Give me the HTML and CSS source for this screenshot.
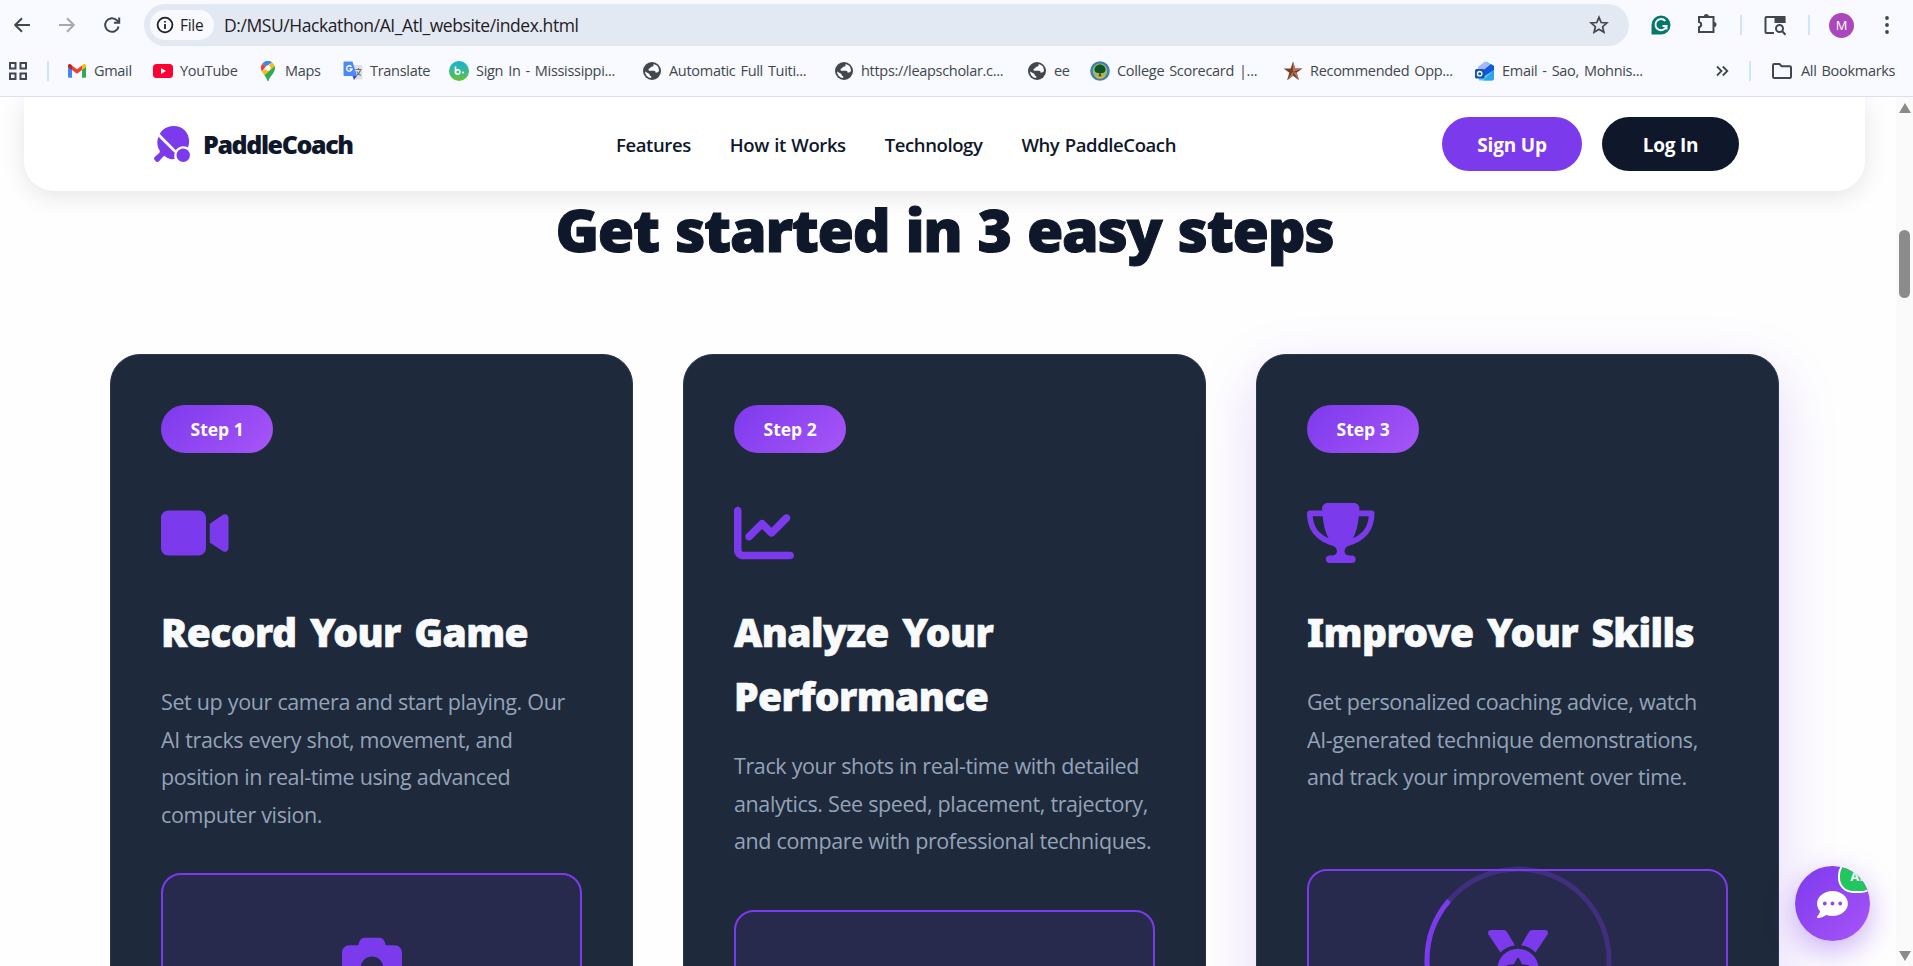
FILE: index.html
```html
<!DOCTYPE html>
<html lang="en">
<head>
    <meta charset="UTF-8">
    <meta name="viewport" content="width=device-width, initial-scale=1.0">
    <title>PaddleCoach</title>
    <link rel="stylesheet" href="styles.css">
</head>
<body>

    <!-- Browser toolbar -->
    <header class="chrome">
        <div class="toolbar">
            <svg class="tool back" viewBox="0 0 20 20"><path d="M18 10H3.5M10 3.2L3.2 10l6.8 6.8" /></svg>
            <svg class="tool forward" viewBox="0 0 20 20"><path d="M2 10h14.5M10 3.2l6.8 6.8-6.8 6.8" /></svg>
            <svg class="tool reload" viewBox="0 0 20 20"><path d="M16.6 11.5a6.8 6.8 0 1 1-1.6-6.1l2 2M17.2 2.5v5.3h-5.3" /></svg>
            <div class="address">
                <span class="chip">
                    <svg viewBox="0 0 18 18"><circle cx="9" cy="9" r="7.4" /><path d="M9 8v5M9 5v1.6" /></svg>
                    <span>File</span>
                </span>
                <span class="url">D:/MSU/Hackathon/AI_Atl_website/index.html</span>
                <svg class="fav" viewBox="0 0 20 20"><path d="M10 2.3l2.2 5.2 5.7.5-4.3 3.7 1.3 5.6-4.9-3-4.9 3 1.3-5.6L2.1 8l5.7-.5z" /></svg>
            </div>
            <div class="extensions">
                <svg class="grammarly" viewBox="0 0 20 20"><path d="M10 .5A9.5 9.5 0 1 1 10 19.500H.5V10A9.5 9.5 0 0 1 10 .5z" fill="#04796b" /><path d="M14.300 6A5.600 5.600 0 1 0 15.500 11H11.500M15.500 10.500v4" fill="none" stroke="#fff" stroke-width="1.900" /></svg>
                <svg class="puzzle" viewBox="0 0 24 24"><path d="M3 5h14.500v15H3v-4.800a2.700 2.700 0 0 0 0-5.300z" /><path class="solid" d="M7.800 4.500a2.500 2.500 0 0 1 5 0zM18 10a2.500 2.500 0 0 1 0 5z" /></svg>
                <i class="divider"></i>
                <svg class="sidesearch" viewBox="0 0 24 24"><path d="M11 20H3.500a1 1 0 0 1-1-1V5a1 1 0 0 1 1-1h16.700a1 1 0 0 1 1 1v5" /><path d="M12.500 4h9v5h-9z" fill="#41474d" /><circle cx="16.500" cy="15.500" r="3.500" /><path d="M19 18l3.500 3.800" /></svg>
                <i class="divider"></i>
                <span class="avatar">M</span>
                <svg class="menu" viewBox="0 0 6 20"><circle cx="3" cy="3" r="1.900" /><circle cx="3" cy="10" r="1.900" /><circle cx="3" cy="17" r="1.900" /></svg>
            </div>
        </div>

        <div class="bookmarks">
            <svg class="apps" viewBox="0 0 20 20"><path d="M2 2h5.500v5.500H2zM12.500 2H18v5.500h-5.500zM2 12.500h5.500V18H2zM12.500 12.500H18V18h-5.500z" /></svg>
            <i class="divider"></i>
            <nav class="bookmark-list">
                <a><svg viewBox="0 0 20 20"><path d="M1 5v10.500c0 .8.600 1.300 1.300 1.300H5V8z" fill="#4285f4" /><path d="M19 5v10.500c0 .8-.6 1.300-1.300 1.300H15V8z" fill="#34a853" /><path d="M15 4.500V9l4-3V5c0-2-2-2.500-3.200-1.200z" fill="#fbbc04" /><path d="M5 4.500l5 3.700 5-3.700V9l-5 3.800L5 9z" fill="#ea4335" /><path d="M5 4.500V9L1 6V5c0-2 2-2.500 3.200-1.200z" fill="#c5221f" /></svg>Gmail</a>
                <a><svg viewBox="0 0 20 20"><rect y="3" width="20" height="14" rx="3.500" fill="#ff0033" /><path d="M8 7v6l5-3z" fill="#fff" /></svg>YouTube</a>
                <a class="maps"><svg viewBox="0 0 20 20"><path d="M10 0a7 7 0 0 0-5.400 2.500L8 5.500 13.800 1.200A7 7 0 0 0 10 0z" fill="#1a73e8" /><path d="M4.600 2.500A7 7 0 0 0 3.800 10.400L8 5.500z" fill="#ea4335" /><path d="M13.800 1.200L7.900 8.600l-4.100 1.800c.6 1.200 1.600 2.500 2.600 3.800L16.700 5A7 7 0 0 0 13.800 1.200z" fill="#fbbc04" /><path d="M16.700 5L6.400 14.200C8 16.400 9 18 9.300 19.400c.2.800 1.200.8 1.400 0C11.500 16 17 12 17 7c0-.7-.1-1.400-.3-2z" fill="#34a853" /><path d="M13.800 1.200L8 5.500 4.600 2.500A7 7 0 0 1 13.800 1.200z" fill="#4285f4" /><circle cx="10" cy="7" r="2.600" fill="#fff" /></svg>Maps</a>
                <a><svg viewBox="0 0 20 20"><path d="M7 4h11.500a1 1 0 0 1 1 1v12.500a1 1 0 0 1-1 1H11z" fill="#dfe1e5" /><path d="M1.500.5h8L14 15H1.500a1 1 0 0 1-1-1V1.500a1 1 0 0 1 1-1z" fill="#4c8bf5" /><path d="M9.500 15H14l-3 4z" fill="#3457c9" /><path d="M8.500 5.800A2.700 2.700 0 1 0 9 8H6.600" fill="none" stroke="#fff" stroke-width="1.300" /><path d="M12.500 8.500h6M15.500 7v1.500M17.500 9c-.8 2.800-2.500 4.500-4 5.500M13.800 10.500c1 2 2.500 3.200 4 4" fill="none" stroke="#6b7785" stroke-width="1.100" /></svg>Translate</a>
                <a><svg viewBox="0 0 20 20"><defs><linearGradient id="bb" x2="0" y2="1"><stop offset="0" stop-color="#14b1e0" /><stop offset="1" stop-color="#62c234" /></linearGradient></defs><circle cx="10" cy="10" r="10" fill="url(#bb)" /><path d="M6.500 5.500v7" stroke="#fff" stroke-width="1.600" /><circle cx="8.700" cy="11" r="2.200" fill="none" stroke="#fff" stroke-width="1.500" /><circle cx="14" cy="11.500" r="1.100" fill="#fff" /></svg>Sign In - Mississippi...</a>
                <a><svg viewBox="0 0 20 20"><use href="#globe" /></svg>Automatic Full Tuiti...</a>
                <a><svg viewBox="0 0 20 20"><use href="#globe" /></svg>https://leapscholar.c...</a>
                <a><svg viewBox="0 0 20 20"><use href="#globe" /></svg>ee</a>
                <a><svg viewBox="0 0 20 20"><circle cx="10" cy="10" r="9.800" fill="#3f7fb5" /><circle cx="10" cy="10" r="7.400" fill="#9db867" /><path d="M9.300 11h1.400l.8 6h-3z" fill="#6b4a12" /><path d="M10 3.500c3 0 5.500 2.500 5.500 5 0 2-1.500 3.500-3 3.500H8c-2 0-3.500-1.500-3.500-3.500 0-2.500 2.500-5 5.500-5z" fill="#0c5527" /><path d="M5 15.500h10l-2.500 2h-5z" fill="#e0b53a" /></svg>College Scorecard |...</a>
                <a><svg viewBox="0 0 20 20"><path d="M10 .5l2.300 7h7l-5.600 4.300 2.200 7.500L10 14.800l-5.900 4.500 2.200-7.500L.7 7.500h7z" fill="#7a3f2c" /><path d="M10 .5v10.200l9.300-3.200h-7zM10 10.700l5.900 8.600-2.200-7.500zM10 10.700l-5.900 8.600L10 14.800z" fill="#b9785a" /></svg>Recommended Opp...</a>
                <a><svg viewBox="0 0 20 20"><path d="M3 6l9-5.500L19 6v11.500a2 2 0 0 1-2 2H4z" fill="#5cc8fb" /><path d="M3 6l7-5.500L17 6 8 12z" fill="#a8b8ff" /><path d="M19 5v4L8 16V9.500L16 3z" fill="#1557d6" /><path d="M8 19.500L19 9v8.500a2 2 0 0 1-2 2z" fill="#28a8ea" /><rect y="8" width="9.500" height="9.500" rx="1.500" fill="#1252b8" /><circle cx="4.700" cy="12.700" r="2.200" fill="none" stroke="#fff" stroke-width="1.400" /></svg>Email - Sao, Mohnis...</a>
            </nav>
            <div class="bookmark-end">
                <svg class="more" viewBox="0 0 14 14"><path d="M2 2.500L6.500 7 2 11.500M7.800 2.500L12.300 7l-4.500 4.500" /></svg>
                <i class="divider"></i>
                <svg class="folder" viewBox="0 0 22 18"><path d="M2 3.300c0-.8.500-1.300 1.200-1.300H8.500l2.200 2.300h8.100c.7 0 1.200.5 1.200 1.200v9.300c0 .7-.5 1.200-1.200 1.200H3.200c-.7 0-1.200-.5-1.200-1.200z" /></svg>
                <span>All Bookmarks</span>
            </div>
        </div>
    </header>

    <div class="viewport">
        <main class="page">
            <nav class="navbar">
                <div class="logo">
                    <svg viewBox="0 0 512 512"><path d="M84 114C92 94 103 79 117 65 200-20 355-21 440 64c65 66 72 172 42 240-20-10-42-16-66-16-44 0-84 24-106 56z" /><path d="M62 152C38 220 44 290 80 350c6 10 5 22-3 30L10 441c-13 12-13 31-1 43l20 20c12 11 31 11 42-2l60-68c9-11 21-10 31-1 35 33 88 46 132 38-10-34-6-66 2-88z" /><circle cx="416" cy="416" r="95" /></svg>
                    <span>PaddleCoach</span>
                </div>
                <div class="nav-links">
                    <a>Features</a>
                    <a>How it Works</a>
                    <a>Technology</a>
                    <a>Why PaddleCoach</a>
                </div>
                <div class="nav-buttons">
                    <button class="btn signup">Sign Up</button>
                    <button class="btn login">Log In</button>
                </div>
            </nav>

            <h2>Get started in 3 easy steps</h2>

            <section class="steps">
                <article class="card">
                    <span class="badge">Step 1</span>
                    <svg class="icon wide" viewBox="0 0 576 512"><path d="M64 64C28.700 64 0 92.700 0 128v256c0 35.300 28.700 64 64 64h256c35.300 0 64-28.700 64-64V128c0-35.300-28.700-64-64-64zM559 99c-10-5-22-5-31 2l-112 75v160l112 75c9 7 21 7 31 2 10-6 17-17 17-29V128c0-12-7-23-17-29z" /></svg>
                    <h3>Record Your Game</h3>
                    <p>Set up your camera and start playing. Our<br>AI tracks every shot, movement, and<br>position in real-time using advanced<br>computer vision.</p>
                    <div class="mock">
                        <svg class="camera" viewBox="0 0 512 512"><path d="M149.100 64.800L138.700 96H64C28.700 96 0 124.700 0 160v256c0 35.300 28.700 64 64 64h384c35.300 0 64-28.700 64-64V160c0-35.300-28.700-64-64-64h-74.700l-10.400-31.200C356.400 45.200 338.100 32 317.400 32H194.600c-20.700 0-39 13.200-45.500 32.800zM256 192a96 96 0 1 1 0 192 96 96 0 1 1 0-192z" /></svg>
                    </div>
                </article>

                <article class="card">
                    <span class="badge">Step 2</span>
                    <svg class="icon" viewBox="0 0 512 512"><path d="M64 64c0-17.700-14.300-32-32-32S0 46.300 0 64v336c0 44.200 35.800 80 80 80h400c17.700 0 32-14.300 32-32s-14.300-32-32-32H80c-8.800 0-16-7.200-16-16V64zm406.600 86.600c12.500-12.500 12.500-32.800 0-45.300s-32.800-12.500-45.300 0L320 210.700l-57.400-57.400c-12.500-12.500-32.800-12.500-45.300 0l-112 112c-12.500 12.500-12.500 32.800 0 45.300s32.800 12.500 45.300 0L240 221.300l57.400 57.400c12.500 12.500 32.800 12.500 45.300 0l128-128z" /></svg>
                    <h3>Analyze Your<br>Performance</h3>
                    <p>Track your shots in real-time with detailed<br>analytics. See speed, placement, trajectory,<br>and compare with professional techniques.</p>
                    <div class="mock second"></div>
                </article>

                <article class="card active">
                    <span class="badge">Step 3</span>
                    <svg class="icon wide" viewBox="0 0 576 512"><path d="M400 0H176c-26.500 0-48.100 21.800-47.100 48.200.2 5.300.4 10.600.7 15.800H24C10.700 64 0 74.700 0 88c0 92.600 33.500 157 78.500 200.700 44.300 43.100 98.300 64.800 138.100 75.800 23.400 6.500 39.400 26 39.400 45.600 0 20.900-17 37.900-37.900 37.900H192c-17.700 0-32 14.300-32 32s14.300 32 32 32h192c17.700 0 32-14.300 32-32s-14.300-32-32-32h-26.100c-20.900 0-37.900-17-37.900-37.900 0-19.600 15.900-39.200 39.400-45.600 39.900-11 93.900-32.700 138.200-75.800C542.500 245 576 180.600 576 88c0-13.300-10.700-24-24-24H446.400c.3-5.200.5-10.400.7-15.800C448.100 21.800 426.500 0 400 0zM48.900 112h84.400c9.100 90.100 29.200 150.300 51.900 190.600-24.900-11-50.800-26.500-73.200-48.300-32-31.100-58-76-63-142.300zm415.300 142.300c-22.400 21.800-48.300 37.300-73.200 48.300 22.700-40.300 42.800-100.500 51.900-190.600h84.400c-5.100 66.300-31.100 111.200-63 142.300z" /></svg>
                    <h3>Improve Your Skills</h3>
                    <p>Get personalized coaching advice, watch<br>AI-generated technique demonstrations,<br>and track your improvement over time.</p>
                    <div class="mock third">
                        <svg class="ring" viewBox="0 0 188 188"><circle class="ring-track" cx="94" cy="94" r="91" /><circle class="ring-value" cx="94" cy="94" r="91" /></svg>
                        <svg class="medal" viewBox="0 0 512 512"><path d="M4.100 38.200C1.400 34.200 0 29.400 0 24.600 0 11 11 0 24.600 0h109.300c11.200 0 21.700 5.900 27.400 15.500l68.500 114.100c-48.200 6.100-91.300 28.600-123.400 61.900zm503.700 0L405.600 191.500c-32.100-33.300-75.200-55.800-123.400-61.900l68.500-114.100C356.500 5.900 366.900 0 378.100 0h109.300C501 0 512 11 512 24.600c0 4.800-1.400 9.600-4.100 13.600zM80 336a176 176 0 1 1 352 0 176 176 0 1 1-352 0zm184.400-94.900c-3.400-7-13.300-7-16.800 0l-22.400 45.400c-1.400 2.800-4 4.700-7 5.100L168 298.900c-7.700 1.100-10.700 10.500-5.200 16l36.300 35.400c2.200 2.200 3.200 5.200 2.700 8.300l-8.600 49.900c-1.300 7.600 6.700 13.500 13.600 9.900l44.800-23.600c2.700-1.400 6-1.400 8.700 0l44.800 23.600c6.900 3.600 14.900-2.200 13.600-9.900l-8.600-49.900c-.5-3 .5-6.100 2.700-8.300l36.300-35.400c5.600-5.400 2.500-14.800-5.200-16l-50.100-7.300c-3-.4-5.700-2.400-7-5.100z" /></svg>
                    </div>
                </article>
            </section>
        </main>

        <div class="scrollbar">
            <i class="arrow up"></i>
            <i class="thumb"></i>
            <i class="arrow down"></i>
        </div>

        <button class="chat">
            <svg viewBox="0 0 512 448"><path fill-rule="evenodd" d="M256 0c141 0 256 93 256 208s-115 208-256 208c-38 0-74-7-106-19-31 24-82 51-134 51-7 0-13-4-15-10s-1-13 3-17c20-21 39-51 45-84C18 301 0 256 0 208 0 93 115 0 256 0zM128 176a32 32 0 1 0 0 64 32 32 0 1 0 0-64zm128 0a32 32 0 1 0 0 64 32 32 0 1 0 0-64zm128 0a32 32 0 1 0 0 64 32 32 0 1 0 0-64z" /></svg>
            <span class="ai">AI</span>
        </button>
    </div>

    <svg class="sprite">
        <symbol id="globe" viewBox="0 0 20 20"><circle cx="10" cy="10" r="9" fill="#43474b" /><path d="M11.500 3c.5 1.800-.3 2.500-2 2.800-1 .2-.8 1.500-2 1.700-1.300.2-1.200 1.500-.3 2.300H12c1.300 0 1.500 1 1.500 1.800 1.300.2 2.500-.5 3.500-1.600A7 7 0 0 0 11.500 3zM3 10.500c.3 3.500 2.700 6.300 6.200 6.600v-2c-1.200-.2-1.800-.9-1.700-2.200z" fill="#fff" /></symbol>
    </svg>

</body>
</html>
```

FILE: styles.css
```css
* {
    box-sizing: border-box;
}
body {
    margin: 0;
    height: 966px;
    overflow: hidden;
    display: flex;
    flex-direction: column;
    font-family: 'Open Sans', 'Noto Sans', sans-serif;
    background: #fefefe;
    color: #0f172a;
}
svg {
    flex-shrink: 0;
}
.sprite {
    position: absolute;
    width: 0;
    height: 0;
}

/* browser bars */
.chrome {
    height: 97px;
    flex-shrink: 0;
    background: #f8faff;
    border-bottom: 1px solid #dbe1ec;
}
.toolbar {
    height: 50px;
    display: flex;
    align-items: center;
    padding-left: 12px;
}
.tool {
    width: 20px;
    height: 20px;
    margin-right: 25px;
    fill: none;
    stroke: #41474d;
    stroke-width: 2;
}
.forward {
    stroke: #a5a8ac;
}
.reload {
    margin-right: 22px;
}
.address {
    width: 1485px;
    height: 42px;
    border-radius: 21px;
    background: #e3e9f3;
    display: flex;
    align-items: center;
    padding: 0 20px 0 6px;
}
.chip {
    width: 64px;
    height: 30px;
    border-radius: 15px;
    background: #f8faff;
    display: flex;
    align-items: center;
    gap: 6px;
    padding-left: 6px;
    font-size: 15.5px;
    font-weight: 500;
    letter-spacing: -0.3px;
    color: #1f2023;
}
.chip svg {
    width: 18px;
    height: 18px;
    fill: none;
    stroke: #1f2023;
    stroke-width: 1.8;
}
.url {
    flex: 1;
    padding-left: 10px;
    font-size: 17.5px;
    letter-spacing: -0.42px;
    color: #1f2023;
}
.fav {
    width: 20px;
    height: 20px;
    fill: none;
    stroke: #41474d;
    stroke-width: 1.7;
}
.extensions {
    display: flex;
    align-items: center;
    padding-left: 22px;
}
.grammarly {
    width: 20px;
    height: 20px;
}
.puzzle {
    width: 24px;
    height: 24px;
    margin: -3px 20px 0 25px;
    fill: none;
    stroke: #41474d;
    stroke-width: 2;
}
.solid {
    fill: #41474d;
    stroke: none;
}
.divider {
    width: 2px;
    height: 20px;
    background: #d0e2fc;
}
.sidesearch {
    width: 24px;
    height: 24px;
    margin: 0 21px;
    fill: none;
    stroke: #41474d;
    stroke-width: 2;
}
.avatar {
    width: 25px;
    height: 25px;
    margin-left: 19px;
    border-radius: 50%;
    background: #ab47bc;
    color: white;
    font-size: 13px;
    line-height: 25px;
    text-align: center;
}
.menu {
    width: 6px;
    height: 20px;
    margin-left: 30px;
    fill: #41474d;
}
.bookmarks {
    height: 42px;
    display: flex;
    align-items: center;
    padding-left: 8px;
    font-size: 14.5px;
    letter-spacing: -0.3px;
    word-spacing: 1.5px;
    color: #41474d;
}
.apps {
    width: 20px;
    height: 20px;
    margin-right: 19px;
    fill: none;
    stroke: #41474d;
    stroke-width: 2;
}
.bookmark-list {
    display: grid;
    grid-template-columns: 86px 105px 85px 106px 193px 192px 193px 63px 193px 192px 200px;
    margin-left: 18px;
}
.bookmark-list a {
    display: flex;
    align-items: center;
    gap: 7px;
    line-height: 18px;
    white-space: nowrap;
}
.bookmark-list svg {
    width: 20px;
    height: 20px;
}
.bookmark-end {
    display: flex;
    align-items: center;
    margin-left: 40px;
    line-height: 18px;
    white-space: nowrap;
}
.more {
    width: 14px;
    height: 14px;
    margin-right: 20px;
    fill: none;
    stroke: #41474d;
    stroke-width: 1.8;
}
.folder {
    width: 22px;
    height: 18px;
    margin: 0 8px 0 20px;
    fill: none;
    stroke: #41474d;
    stroke-width: 2;
}

/* page */
.viewport {
    position: relative;
    flex: 1;
    min-height: 0;
    display: flex;
}
.page {
    width: 1896px;
    height: 869px;
    overflow: hidden;
    padding: 0 31px 0 24px;
}
.navbar {
    height: 94px;
    padding: 0 126px 0 130px;
    display: flex;
    align-items: center;
    background: white;
    border-radius: 0 0 30px 30px;
    box-shadow: 0 5px 25px rgba(0, 0, 0, 0.1);
}
.logo {
    width: 462px;
    display: flex;
    align-items: center;
    gap: 13px;
    font-family: 'Noto Sans', sans-serif;
    font-size: 25px;
    font-weight: 900;
    letter-spacing: -1.4px;
}
.logo svg {
    width: 36px;
    height: 36px;
    fill: #7c3aed;
}
.nav-links {
    flex: 1;
    display: flex;
    gap: 39px;
    font-size: 18.5px;
    font-weight: 600;
    letter-spacing: -0.4px;
    word-spacing: 1px;
    white-space: nowrap;
}
.nav-buttons {
    display: flex;
    gap: 20px;
}
.btn {
    width: 140px;
    height: 54px;
    padding: 2px 0 0;
    border: none;
    border-radius: 27px;
    background: #7c3aed;
    color: white;
    font-family: inherit;
    font-size: 19px;
    font-weight: 700;
    letter-spacing: -0.2px;
}
.login {
    width: 137px;
    background: #0f172a;
}
h2 {
    margin: 0;
    height: 163px;
    text-align: center;
    font-family: 'Noto Sans', sans-serif;
    font-size: 59px;
    font-weight: 900;
    line-height: 76px;
    letter-spacing: -1.3px;
    word-spacing: 2px;
    -webkit-text-stroke: 1px #0f172a;
}
.steps {
    display: grid;
    grid-template-columns: repeat(3, 523px);
    gap: 50px;
    padding-left: 86px;
}
.card {
    height: 800px;
    padding: 50px;
    display: flex;
    flex-direction: column;
    align-items: flex-start;
    background: #1e293b;
    border: 1px solid #2b374a;
    border-radius: 30px;
}
.active {
    box-shadow: 0 20px 60px rgba(124, 58, 237, 0.2);
}
.badge {
    height: 48px;
    padding: 0 29.5px;
    border-radius: 25px;
    background: linear-gradient(135deg, #7c3aed, #a855f7);
    color: white;
    font-size: 17.5px;
    font-weight: 700;
    line-height: 49px;
}
.icon {
    width: 60px;
    height: 60px;
    margin: 50px 0 37px;
    fill: #7c3aed;
}
.wide {
    width: 67.5px;
}
h3 {
    margin: 0 0 19px;
    color: #f8fafc;
    font-family: 'Noto Sans', sans-serif;
    font-size: 39px;
    font-weight: 900;
    line-height: 64px;
    letter-spacing: -0.6px;
    word-spacing: 4px;
    white-space: nowrap;
    -webkit-text-stroke: 0.6px #f8fafc;
}
.card p {
    margin: 0;
    color: #94a3b8;
    font-size: 21.5px;
    line-height: 37.6px;
    letter-spacing: -0.4px;
    word-spacing: 0.3px;
    white-space: nowrap;
}
.mock {
    position: relative;
    width: 421px;
    height: 300px;
    margin-top: 39.5px;
    flex-shrink: 0;
    display: flex;
    justify-content: center;
    background: rgba(124, 58, 237, 0.1);
    border: 2px solid #7c3aed;
    border-radius: 20px;
}
.second {
    margin-top: 50px;
}
.third {
    margin-top: 73px;
}
.camera {
    width: 60px;
    height: 60px;
    margin-top: 59px;
    fill: #7c3aed;
}
.medal {
    width: 60px;
    height: 60px;
    margin-top: 59px;
    fill: #7c3aed;
}
.ring {
    position: absolute;
    top: -5px;
    left: 115px;
    width: 188px;
    height: 188px;
    fill: none;
    stroke: #7c3aed;
    stroke-width: 5;
}
.ring-track {
    opacity: 0.3;
}
.ring-value {
    stroke-dasharray: 200 600;
    stroke-dashoffset: -150;
}

/* scrollbar */
.scrollbar {
    width: 17px;
    background: #fafafa;
    display: flex;
    flex-direction: column;
    align-items: center;
    padding: 6px 0 5px;
}
.arrow {
    border-left: 6px solid transparent;
    border-right: 6px solid transparent;
}
.up {
    border-bottom: 10px solid #8b8b8b;
}
.down {
    margin-top: auto;
    border-top: 10px solid #8b8b8b;
}
.thumb {
    width: 11px;
    height: 68px;
    margin-top: 117px;
    border-radius: 6px;
    background: #8b8b8b;
}

/* chat button floats over the page */
.chat {
    position: absolute;
    right: 43px;
    bottom: 25px;
    width: 75px;
    height: 75px;
    padding: 0;
    border: none;
    border-radius: 50%;
    overflow: hidden;
    background: linear-gradient(135deg, #7c3aed, #a855f7);
    box-shadow: 0 10px 30px rgba(124, 58, 237, 0.4);
    font-family: inherit;
}
.chat svg {
    width: 31px;
    height: 27px;
    margin-top: 2px;
    fill: white;
    vertical-align: middle;
}
.ai {
    position: absolute;
    top: -6px;
    right: -6px;
    width: 38px;
    height: 33px;
    border: 2px solid white;
    border-radius: 15px;
    background: #22c55e;
    color: white;
    font-size: 13px;
    font-weight: 700;
    line-height: 29px;
}
```
